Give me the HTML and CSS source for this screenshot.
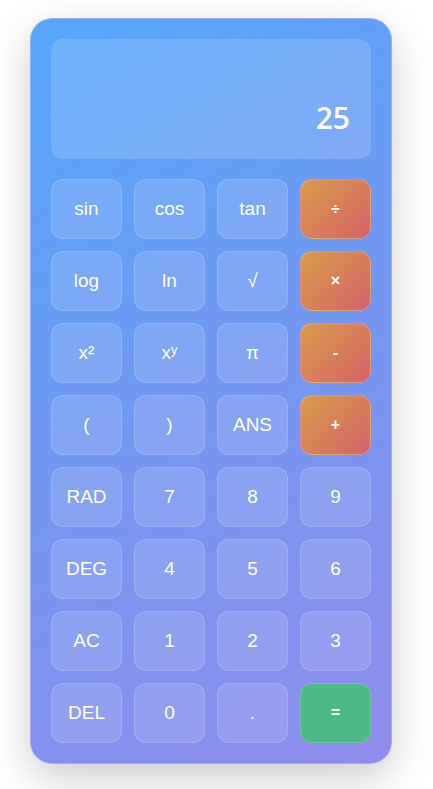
FILE: index.html
```html
<!DOCTYPE html>
<html>
<head>
<meta charset="utf-8">
<link rel="stylesheet" href="styles.css">
</head>
<body>
<div class="calc">
  <div class="display"><span class="value">25</span></div>
  <div class="keys">
    <button class="key">sin</button>
    <button class="key">cos</button>
    <button class="key">tan</button>
    <button class="key op">÷</button>
    <button class="key">log</button>
    <button class="key">ln</button>
    <button class="key">√</button>
    <button class="key op">×</button>
    <button class="key">x²</button>
    <button class="key">x<sup>y</sup></button>
    <button class="key">π</button>
    <button class="key op">-</button>
    <button class="key">(</button>
    <button class="key">)</button>
    <button class="key">ANS</button>
    <button class="key op">+</button>
    <button class="key">RAD</button>
    <button class="key">7</button>
    <button class="key">8</button>
    <button class="key">9</button>
    <button class="key">DEG</button>
    <button class="key">4</button>
    <button class="key">5</button>
    <button class="key">6</button>
    <button class="key">AC</button>
    <button class="key">1</button>
    <button class="key">2</button>
    <button class="key">3</button>
    <button class="key">DEL</button>
    <button class="key">0</button>
    <button class="key">.</button>
    <button class="key eq">=</button>
  </div>
</div>
</body>
</html>
```
FILE: styles.css
```css
html, body {
  margin: 0;
  padding: 0;
  background: #ffffff;
}
body {
  box-sizing: border-box;
  min-height: 789px;
  padding: 18px 0 26px 30px;
  font-family: "Liberation Sans", Arial, sans-serif;
}
.calc {
  width: 320px;
  padding: 20px;
  border: 1px solid rgba(255,255,255,0.25);
  border-radius: 22px;
  background: linear-gradient(150deg, #55a6fb 0%, #6f98f2 45%, #8f8ceb 100%);
  box-shadow: 0 14px 40px rgba(0,0,0,0.2);
}
.display {
  height: 120px;
  box-sizing: border-box;
  border-radius: 12px;
  background: rgba(255,255,255,0.15);
  display: flex;
  align-items: flex-end;
  justify-content: flex-end;
  padding: 0 21px 26px 20px;
  margin-bottom: 20px;
}
.value {
  font-family: "Open Sans", "Noto Sans", sans-serif;
  font-size: 30px;
  font-weight: 600;
  color: #ffffff;
  line-height: 1;
}
.keys {
  display: grid;
  grid-template-columns: repeat(4, 71px);
  grid-auto-rows: 60px;
  column-gap: 12px;
  row-gap: 12px;
}
.key {
  margin: 0;
  padding: 0;
  border: 1px solid rgba(255,255,255,0.15);
  border-radius: 12px;
  background: rgba(255,255,255,0.13);
  color: #ffffff;
  font-family: "Liberation Sans", Arial, sans-serif;
  font-size: 19px;
  display: flex;
  align-items: center;
  justify-content: center;
}
.key sup {
  font-size: 13px;
  line-height: 0;
  position: relative;
  top: -3px;
}
.op {
  background: linear-gradient(135deg, #d79c48 0%, #d7626a 100%);
  border-color: rgba(255,255,255,0.2);
  font-size: 16px;
  font-weight: bold;
}
.eq {
  background: #4dba86;
  border-color: rgba(255,255,255,0.15);
  font-size: 16px;
  font-weight: bold;
}
```
